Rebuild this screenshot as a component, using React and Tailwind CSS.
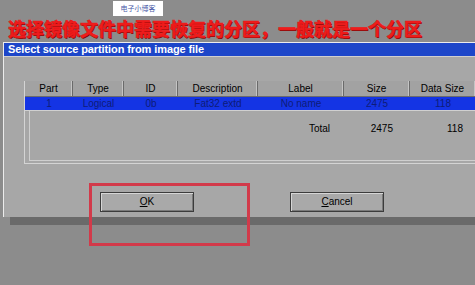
import React from "react";

const cols = [
  { key: "part", label: "Part", w: "w-[48px]" },
  { key: "type", label: "Type", w: "w-[51px]" },
  { key: "id", label: "ID", w: "w-[54px]" },
  { key: "desc", label: "Description", w: "w-[80px]" },
  { key: "label", label: "Label", w: "w-[86px]" },
  { key: "size", label: "Size", w: "w-[66px]" },
  { key: "data", label: "Data Size", w: "w-[66px]" },
];

const row = {
  part: "1",
  type: "Logical",
  id: "0b",
  desc: "Fat32 extd",
  label: "No name",
  size: "2475",
  data: "118",
};

function Button({ hot, rest }) {
  return (
    <button className="w-[94px] h-[20px] border border-[#3c3c3c] bg-[#a9a9a9] shadow-[inset_1px_1px_0_#d6d6d6,inset_-1px_-1px_0_#7a7a7a] text-[10px] text-black leading-none">
      <span className="underline">{hot}</span>
      {rest}
    </button>
  );
}

export default function App() {
  return (
    <div
      className="relative w-[475px] h-[285px] overflow-hidden bg-[#8c8c8c]"
      style={{ fontFamily: '"Liberation Sans", "Noto Sans CJK SC", sans-serif' }}
    >
      {/* watermark */}
      <div className="absolute left-[113px] top-[1px] w-[50px] h-[15px] bg-white flex items-center justify-center text-[7px] text-[#4a5aa8] font-['Noto_Sans_CJK_SC',sans-serif]">
        电子小博客
      </div>

      <h1 className="h-[42px] pt-[17px] pl-[8px] text-[18px] leading-[22px] font-bold text-[#f01c1c] font-['Noto_Sans_CJK_SC',sans-serif] [-webkit-text-stroke:0.6px_#e81818] [text-shadow:1px_1px_0_#7a0a0a]">
        选择镜像文件中需要恢复的分区，一般就是一个分区
      </h1>

      {/* dialog */}
      <div className="ml-[3px] w-[480px] border-l border-t border-[#ececec] bg-[#a7a7a7] shadow-[7px_8px_0_#6a6a6a]">
        <div className="h-[14px] bg-[#1d46c9] border-b border-[#cfcfcf] pl-[4px] flex items-center text-white text-[11px] font-bold tracking-[-0.1px]">
          Select source partition from image file
        </div>

        <div className="h-[160px] pt-[24px] pl-[20px] flex flex-col">
          <div className="w-[460px] border-l border-b border-[#d4d4d4] pb-[2px]">
            <div className="border-b border-[#d0d0d0]">
              <div className="flex h-[16px] bg-[#a2a2a2] border-b border-[#6c6c6c]">
                {cols.map((c) => (
                  <div
                    key={c.key}
                    className={`${c.w} shrink-0 border-r border-[#6a6a6a] shadow-[inset_-1px_0_0_#c4c4c4] flex items-center justify-center text-[10px] text-black`}
                  >
                    {c.label}
                  </div>
                ))}
              </div>
              <div className="flex h-[13px] bg-[#1434e4]">
                {cols.map((c) => (
                  <div
                    key={c.key}
                    className={`${c.w} shrink-0 flex items-center justify-center text-[10px] text-[#0e1c78]`}
                  >
                    {row[c.key]}
                  </div>
                ))}
              </div>
            </div>
            <div className="ml-[4px] h-[50px] border-l border-b border-[#cfcfcf] flex pt-[10px]">
              <div className="w-[229px] shrink-0" />
              <div className="w-[86px] shrink-0 text-right pr-[15px] text-[10px] text-black">Total</div>
              <div className="w-[66px] shrink-0 text-right pr-[18px] text-[10px] text-black">2475</div>
              <div className="w-[66px] shrink-0 text-right pr-[14px] text-[10px] text-black">118</div>
            </div>
          </div>

          <div className="mt-[28px] ml-[76px] flex gap-[96px]">
            <Button hot="O" rest="K" />
            <Button hot="C" rest="ancel" />
          </div>
        </div>
      </div>

      {/* annotation box */}
      <div className="absolute left-[89px] top-[183px] w-[161px] h-[63px] border-[3px] border-[#d23a4a]" />
    </div>
  );
}
